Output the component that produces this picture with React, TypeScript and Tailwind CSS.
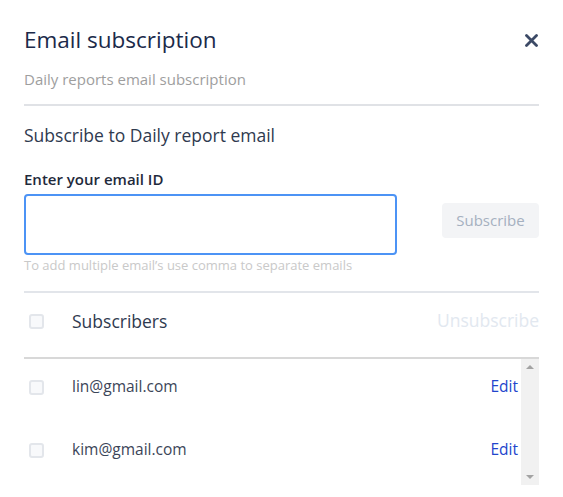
import React from "react";

function Checkbox() {
  return <div className="w-[15px] h-[15px] rounded-[3px] border-2 border-[#e3e6eb] bg-[#f8f9fb] shrink-0" />;
}

export default function App() {
  const emails = ["lin@gmail.com", "kim@gmail.com"];
  return (
    <div
      className="w-[563px] h-[497px] bg-white px-6 overflow-hidden"
      style={{ fontFamily: "'Open Sans', Roboto, sans-serif" }}
    >
      <div className="flex justify-between items-center pt-[26px]">
        <h1 className="text-[22.5px] leading-[28px] text-[#1b2a4a]">Email subscription</h1>
        <svg width="13" height="13" viewBox="0 0 13 13" className="mr-px mt-[1px]">
          <path d="M1.5 1.5 L11.5 11.5 M11.5 1.5 L1.5 11.5" stroke="#3c4a66" strokeWidth="2.8" strokeLinecap="round" />
        </svg>
      </div>
      <p className="mt-[15px] text-[15px] leading-[20px] text-[#9e9e9e]">Daily reports email subscription</p>
      <div className="mt-[15px] h-[2px] bg-[#e0e2e6]" />
      <p className="mt-[17px] text-[17.5px] leading-[24px] text-[#2f3a4f]">Subscribe to Daily report email</p>
      <p className="mt-[22px] text-[15px] leading-[20px] font-semibold text-[#1f2a3c]">Enter your email ID</p>
      <div className="mt-[5px] flex items-start justify-between">
        <input
          className="w-[373px] h-[61px] border-2 border-[#4c93f5] rounded-[4px] outline-none px-3"
          type="text"
        />
        <button className="mt-[9px] h-[35px] w-[97px] rounded-[4px] bg-[#f3f4f6] text-[15px] text-[#a5b0c0]">
          Subscribe
        </button>
      </div>
      <p className="mt-[2px] text-[13px] leading-[16px] text-[#c9c9c9]">
        To add multiple email’s use comma to separate emails
      </p>
      <div className="mt-[18px] h-[2px] bg-[#e2e5ea]" />
      <div className="h-[64px] flex items-center pl-[5px] pb-[7px]">
        <Checkbox />
        <span className="ml-[28px] text-[17.5px] text-[#2f3a4f] flex-1">Subscribers</span>
        <span className="text-[17.5px] text-[#e2e8f0] -mt-[3px] whitespace-nowrap">Unsubscribe</span>
      </div>
      <div className="h-[2px] bg-[#d8d8d8]" />
      <div className="flex h-[126px]">
        <div className="flex-1 pt-[18px] pr-[3px] flex flex-col gap-[43px]">
          {emails.map((e) => (
            <div key={e} className="h-[20px] flex items-center pl-[5px]">
              <Checkbox />
              <span className="ml-[28px] text-[15.5px] text-[#3b4558] flex-1">{e}</span>
              <span className="text-[15.5px] text-[#2244cc]">Edit</span>
            </div>
          ))}
        </div>
        <div className="w-[18px] bg-[#f1f1f1] flex flex-col items-center justify-between py-[6px]">
          <div className="w-0 h-0 border-l-[4px] border-r-[4px] border-b-[4px] border-l-transparent border-r-transparent border-b-[#a3a3a3]" />
          <div className="w-0 h-0 border-l-[4px] border-r-[4px] border-t-[4px] border-l-transparent border-r-transparent border-t-[#a3a3a3]" />
        </div>
      </div>
    </div>
  );
}
